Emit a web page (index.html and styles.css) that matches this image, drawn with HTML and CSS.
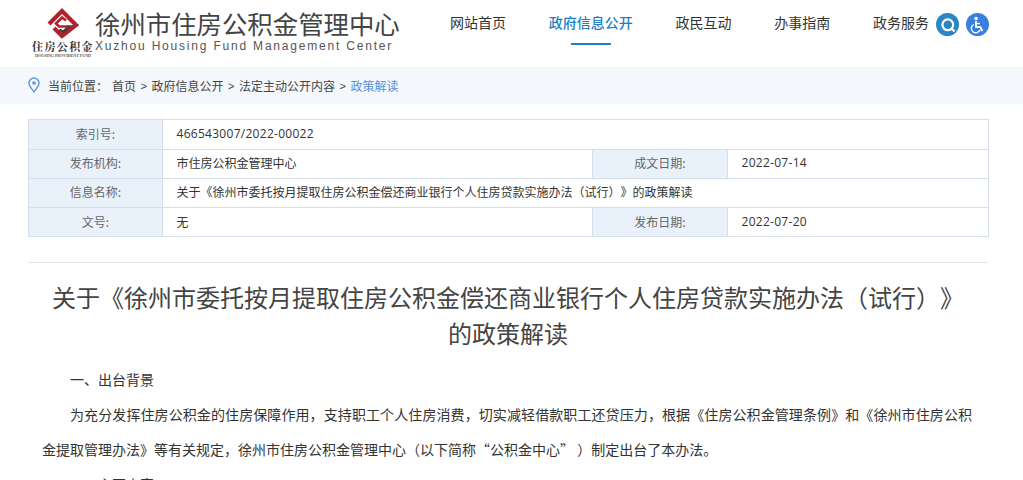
FILE: index.html
```html
<!DOCTYPE html>
<html lang="zh-CN">
<head>
<meta charset="utf-8">
<title>政策解读</title>
<link rel="stylesheet" href="styles.css">
</head>
<body>
<header class="header">
  <div class="logo">
    <div class="logo-mark">
      <svg class="logo-svg" width="34" height="32" viewBox="0 0 34 32">
        <path d="M3 17 L16 4 L30 18 L16 29 L8 21" fill="none" stroke="#b3202c" stroke-width="4.2" stroke-linejoin="miter"/>
        <path d="M20 13.500 L16 10.500 L10 16.500 L13 19.500 L21 19.500" fill="none" stroke="#b3202c" stroke-width="2.6"/>
        <path d="M21 19.500 L23 19.500 L17 25 L13.500 22.500" fill="none" stroke="#4a3a3a" stroke-width="2.6"/>
      </svg>
      <div class="logo-small">住房公积金</div>
      <div class="logo-tiny">HOUSING PROVIDENT FUND</div>
    </div>
    <div class="logo-text">
      <div class="logo-name">徐州市住房公积金管理中心</div>
      <div class="logo-en">Xuzhou Housing Fund Management Center</div>
    </div>
  </div>
  <nav class="nav">
    <a class="nav-item">网站首页</a>
    <a class="nav-item active">政府信息公开</a>
    <a class="nav-item">政民互动</a>
    <a class="nav-item">办事指南</a>
    <a class="nav-item">政务服务</a>
  </nav>
  <div class="tools">
    <span class="tool tool-search">
      <svg width="22" height="22" viewBox="0 0 22 22"><circle cx="10.800" cy="10.800" r="5.400" fill="none" stroke="#fff" stroke-width="2.200"/><path d="M14.800 14.800 L17.500 17.500" stroke="#fff" stroke-width="2.200"/></svg>
    </span>
    <span class="tool tool-access">
      <svg width="24" height="24" viewBox="0 0 24 24"><circle cx="10.500" cy="5.200" r="1.900" fill="#fff"/><path d="M10.300 8 L10.600 14 L15 14 L17 18.500" fill="none" stroke="#fff" stroke-width="2"/><path d="M8 11.500 A4.600 4.600 0 1 0 14.500 17" fill="none" stroke="#fff" stroke-width="1.400"/><path d="M10.500 10.500 L14.500 10.500" stroke="#fff" stroke-width="1.400"/></svg>
    </span>
  </div>
</header>

<div class="crumbs">
  <svg class="pin" width="12" height="16" viewBox="0 0 12 16"><path d="M6 1 A5 5 0 0 1 11 6 C11 9.500 7.500 12.500 6 15 C4.500 12.500 1 9.500 1 6 A5 5 0 0 1 6 1 Z" fill="none" stroke="#5b95dc" stroke-width="1.400"/><circle cx="6" cy="6" r="1.800" fill="#5b95dc"/></svg>
  <span class="crumb-label">当前位置：</span>
  <span>首页</span><span class="sep">&gt;</span>
  <span>政府信息公开</span><span class="sep">&gt;</span>
  <span>法定主动公开内容</span><span class="sep">&gt;</span>
  <span class="crumb-current">政策解读</span>
</div>

<main class="main">
  <table class="meta">
    <colgroup><col class="c1"><col class="c2"><col class="c3"><col class="c4"></colgroup>
    <tr class="r1"><th>索引号:</th><td colspan="3" class="num">466543007/2022-00022</td></tr>
    <tr class="r2"><th>发布机构:</th><td>市住房公积金管理中心</td><th>成文日期:</th><td class="num">2022-07-14</td></tr>
    <tr class="r2"><th>信息名称:</th><td colspan="3">关于《徐州市委托按月提取住房公积金偿还商业银行个人住房贷款实施办法（试行）》的政策解读</td></tr>
    <tr class="r1"><th>文号:</th><td>无</td><th>发布日期:</th><td class="num">2022-07-20</td></tr>
  </table>
  <hr class="rule">
  <h1 class="title">关于《徐州市委托按月提取住房公积金偿还商业银行个人住房贷款实施办法（试行）》<br>的政策解读</h1>
  <div class="article">
    <p>一、出台背景</p>
    <p>为充分发挥住房公积金的住房保障作用，支持职工个人住房消费，切实减轻借款职工还贷压力，根据《住房公积金管理条例》和《徐州市住房公积金提取管理办法》等有关规定，徐州市住房公积金管理中心（以下简称“公积金中心” ）制定出台了本办法。</p>
    <p>二、主要内容</p>
  </div>
</main>
</body>
</html>
```
FILE: styles.css
```css
* { box-sizing: border-box; }
html, body { margin: 0; padding: 0; height: 480px; overflow: hidden; }
body {
  background: #fff;
  color: #333;
  font-family: "Noto Sans CJK SC", "Noto Sans", sans-serif;
  font-size: 14px;
  text-spacing-trim: space-all;
}
.header {
  height: 67px;
  display: flex;
  align-items: flex-start;
  padding-left: 31px;
}
.logo { display: flex; width: 419px; flex: none; }
.logo-mark { width: 64px; display: flex; flex-direction: column; align-items: center; padding-top: 7px; }
.logo-svg { display: block; }
.logo-small { font-size: 11px; line-height: 13px; margin-top: 1px; font-weight: 700; color: #333; letter-spacing: 1.4px; white-space: nowrap; font-family: "Noto Serif CJK SC", "Noto Sans CJK SC", serif; }
.logo-tiny { font-size: 4px; line-height: 5px; color: #555; white-space: nowrap; font-family: "Liberation Serif", serif; font-weight: 700; }
.logo-text { padding-top: 9px; }
.logo-name { font-size: 25.400px; line-height: 29px; color: #444; white-space: nowrap; font-weight: 400; }
.logo-en { font-family: "Liberation Sans", sans-serif; font-size: 12px; line-height: 14px; letter-spacing: 1.800px; color: #555; white-space: nowrap; margin-top: 1px; }
.nav { display: flex; gap: 42.750px; flex: none; }
.nav-item { display: block; height: 45px; line-height: 45px; font-size: 14px; color: #333; white-space: nowrap; position: relative; }
.nav-item.active { color: #1f7fc4; font-weight: 500; }
.nav-item.active::after { content: ""; position: absolute; left: 22px; bottom: 0; width: 40px; height: 2px; background: #1f7fc4; }
.tools { display: flex; gap: 7px; margin-left: 7px; padding-top: 13px; }
.tool { width: 23px; height: 23px; border-radius: 50%; display: flex; align-items: center; justify-content: center; }
.tool-search { background: #2b86c5; }
.tool-access { background: #3a7fe0; }
.crumbs {
  height: 37px;
  background: #f4f8fc;
  display: flex;
  align-items: center;
  padding-left: 28px;
  font-size: 12px;
  color: #444;
}
.pin { margin-right: 8px; position: relative; top: -1px; }
.crumb-label { margin-right: 4px; }
.sep { width: 15.500px; text-align: center; font-family: "Liberation Sans", sans-serif; font-size: 11px; }
.crumb-current { color: #5b8fd9; }
.main { padding: 15px 35px 0 28px; }
.meta { width: 960px; border-collapse: collapse; table-layout: fixed; font-size: 12px; }
.c1 { width: 134px; }
.c2 { width: 430px; }
.c3 { width: 135px; }
.c4 { width: 261px; }
.meta th, .meta td { border: 1px solid #d6deea; padding: 0 0 1px 13.500px; }
.r1 { height: 29.500px; }
.r2 { height: 29px; }
.r2 th, .r2 td { padding-bottom: 2px; }
.meta th { background: #e9f2fb; font-weight: 400; text-align: center; color: #666; padding-left: 0; }
.meta td { color: #333; }
.meta .num { font-family: "Open Sans", "Noto Sans CJK SC", sans-serif; letter-spacing: 0.280px; }
.rule { margin: 25px 0 0; border: 0; border-top: 1px solid #dfe4ea; width: 960px; }
.title { width: 960px; margin: 0; padding-top: 16px; font-size: 24px; line-height: 36px; font-weight: 400; color: #444; text-align: center; }
.article { width: 960px; padding: 11px 16px 0 14px; color: #333; font-size: 14px; line-height: 35px; }
.article p { margin: 0; text-indent: 28px; text-align: justify; }
```
